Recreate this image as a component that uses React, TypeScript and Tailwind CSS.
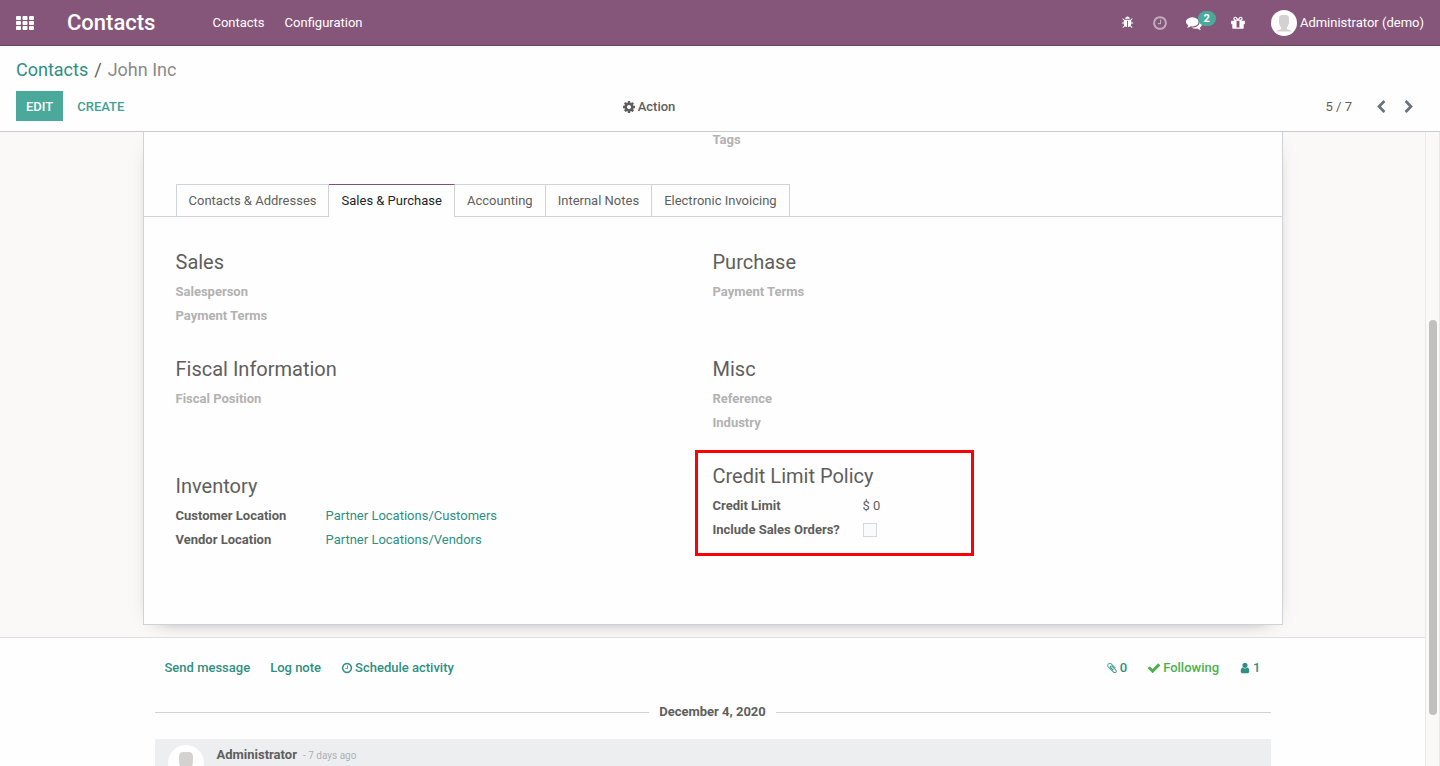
import type { ReactNode } from "react";

const PATHS = {
  clock:
    "M1024 544v448q0 14-9 23t-23 9h-320q-14 0-23-9t-9-23v-64q0-14 9-23t23-9h224v-352q0-14 9-23t23-9h64q14 0 23 9t9 23zm416 352q0-148-73-273t-198-198-273-73-273 73-198 198-73 273 73 273 198 198 273 73 273-73 198-198 73-273zm224 0q0 209-103 385.5t-279.5 279.5-385.5 103-385.5-103-279.5-279.5-103-385.5 103-385.5 279.5-279.5 385.5-103 385.5 103 279.5 279.5 103 385.5z",
  bug: "M1696 960q0 26-19 45t-45 19h-224q0 171-67 290l208 209q19 19 19 45t-19 45q-18 19-45 19t-45-19l-198-197q-5 5-15 13t-42 28.5-65 36.5-82 29-97 13v-896h-128v896q-51 0-101.5-13.5t-87-33-66-39-43.5-32.5l-15-14-183 207q-20 21-48 21-24 0-43-16-19-18-20.5-44.5t15.5-46.5l202-227q-58-114-58-274h-224q-26 0-45-19t-19-45 19-45 45-19h224v-294l-173-173q-19-19-19-45t19-45 45-19 45 19l173 173h844l173-173q19-19 45-19t45 19 19 45-19 45l-173 173v294h224q26 0 45 19t19 45zm-480-576h-640q0-133 93.5-226.5t226.5-93.5 226.5 93.5 93.5 226.5z",
  comments:
    "M1408 768q0 139-94 257t-256.5 186.5-353.5 68.5q-86 0-176-16-124 88-278 128-36 9-86 16h-3q-11 0-20.5-8t-11.5-21q-1-3-1-6.5t.5-6.5 2-6l2.5-5 3.5-5.5 4-5 4.5-5 4-4.5q5-6 23-25t26-29.5 22.5-29 25-38.5 20.5-44q-124-72-195-177t-71-224q0-139 94-257t256.5-186.5 353.5-68.5 353.5 68.5 256.5 186.5 94 257zm384 256q0 120-71 224.5t-195 176.5q10 24 20.5 44t25 38.5 22.5 29 26 29.5 23 25q1 1 4 4.5t4.5 5 4 5 3.5 5.5l2.5 5 2 6 .5 6.5-1 6.5q-3 14-13 22t-22 7q-50-7-86-16-154-40-278-128-90 16-176 16-271 0-472-132 58 4 88 4 161 0 309-45t264-129q125-92 192-212t67-254q0-77-23-152 129 71 204 178t75 230z",
  gift: "M1056 1356v-716h-320v716q0 25 18 38.5t46 13.5h192q28 0 46-13.5t18-38.5zm-456-844h195l-126-161q-26-31-69-31-40 0-68 28t-28 68 28 68 68 28zm688-96q0-40-28-68t-68-28q-43 0-69 31l-125 161h194q40 0 68-28t28-68zm376 256v320q0 14-9 23t-23 9h-96v416q0 40-28 68t-68 28h-1088q-40 0-68-28t-28-68v-416h-96q-14 0-23-9t-9-23v-320q0-14 9-23t23-9h440q-93 0-158.5-65.5t-65.5-158.5 65.5-158.5 158.5-65.5q107 0 168 77l128 165 128-165q61-77 168-77 93 0 158.5 65.5t65.5 158.5-65.5 158.5-158.5 65.5h440q14 0 23 9t9 23z",
  cog: "M1152 896q0-106-75-181t-181-75-181 75-75 181 75 181 181 75 181-75 75-181zm512-109v222q0 12-8 23t-20 13l-185 28q-19 54-39 91 35 50 107 138 10 12 10 25t-9 23q-27 37-99 108t-94 71q-12 0-26-9l-138-108q-44 23-91 38-16 136-29 186-7 28-36 28h-222q-14 0-24.5-8.5t-11.5-21.5l-28-184q-49-16-90-37l-141 107q-10 9-25 9-14 0-25-11-126-114-165-168-7-10-7-23 0-12 8-23 15-21 51-66.5t54-70.5q-27-50-41-99l-183-27q-13-2-21-12.5t-8-23.5v-222q0-12 8-23t19-13l186-28q14-46 39-92-40-57-107-138-10-12-10-24 0-10 9-23 26-36 98.5-107.5t94.5-71.5q13 0 26 10l138 107q44-23 91-38 16-136 29-186 7-28 36-28h222q14 0 24.5 8.5t11.5 21.5l28 184q49 16 90 37l142-107q9-9 24-9 13 0 25 10 129 119 165 170 7 8 7 22 0 12-8 23-15 21-51 66.5t-54 70.5q26 50 41 98l183 28q13 2 21 12.5t8 23.5z",
  left: "M1427 301l-531 531 531 531q19 19 19 45t-19 45l-166 166q-19 19-45 19t-45-19l-742-742q-19-19-19-45t19-45l742-742q19-19 45-19t45 19l166 166q19 19 19 45t-19 45z",
  right:
    "M1363 877l-742 742q-19 19-45 19t-45-19l-166-166q-19-19-19-45t19-45l531-531-531-531q-19-19-19-45t19-45l166-166q19-19 45-19t45 19l742 742q19 19 19 45t-19 45z",
  check:
    "M1671 566q0 40-28 68l-724 724-136 136q-28 28-68 28t-68-28l-136-136-362-362q-28-28-28-68t28-68l136-136q28-28 68-28t68 28l294 295 656-657q28-28 68-28t68 28l136 136q28 28 28 68z",
  user: "M1536 1399q0 109-62.5 187t-150.5 78h-854q-88 0-150.5-78t-62.5-187q0-85 8.5-160.5t31.5-152 58.5-131 94-89 134.5-34.5q131 128 313 128t313-128q76 0 134.5 34.5t94 89 58.5 131 31.5 152 8.5 160.5zm-256-887q0 159-112.5 271.5t-271.5 112.5-271.5-112.5-112.5-271.5 112.5-271.5 271.5-112.5 271.5 112.5 112.5 271.5z",
  clip: "M1596 1385q0 117-79 196t-196 79q-135 0-235-100l-777-776q-113-115-113-271 0-159 110-270t269-111q158 0 273 113l605 606q10 10 10 22 0 16-30.5 46.5t-46.5 30.5q-13 0-23-10l-606-607q-79-77-181-77-106 0-179 75t-73 181q0 105 76 181l776 777q63 63 145 63 64 0 106-42t42-106q0-82-63-145l-581-581q-26-24-60-24-29 0-48 19t-19 48q0 32 25 59l410 410q10 10 10 22 0 16-31 47t-47 31q-12 0-22-10l-410-410q-63-61-63-149 0-82 57-139t139-57q88 0 149 63l581 581q100 98 100 235z",
};

function Icon({ name, className }: { name: keyof typeof PATHS; className: string }) {
  return (
    <svg viewBox="0 0 1792 1792" fill="currentColor" aria-hidden="true" className={`shrink-0 ${className}`}>
      <path d={PATHS[name]} />
    </svg>
  );
}

function Avatar({ className }: { className: string }) {
  return (
    <svg viewBox="0 0 26 26" aria-hidden="true" className={`shrink-0 rounded-full ${className}`}>
      <rect width="26" height="26" fill="#fefefe" />
      <path
        d="M11 5h4c2 0 3 1.300 3 3.200v3.300c0 2.700-.8 4.900-2.200 6.200v1.200c1 .9 4 .8 5.200 2.600H5c1.200-1.800 4.200-1.700 5.200-2.600v-1.200C8.800 16.400 8 14.200 8 11.500V8.200C8 6.300 9 5 11 5z"
        fill="#d3d2d0"
      />
    </svg>
  );
}

function Group({ title, children }: { title: string; children?: ReactNode }) {
  return (
    <section className="relative min-h-[81px]">
      <h2 className="mb-[3px] text-xl leading-[30px]">{title}</h2>
      {children}
    </section>
  );
}

function EmptyField({ label }: { label: string }) {
  return <div className="font-bold leading-6 text-[#b2b2b2]">{label}</div>;
}

function LinkField({ label, value }: { label: string; value: string }) {
  return (
    <div className="flex leading-6">
      <span className="w-[150px] font-bold">{label}</span>
      <a href="#location" className="text-[#2f8f83]">
        {value}
      </a>
    </div>
  );
}

const TABS = ["Contacts & Addresses", "Sales & Purchase", "Accounting", "Internal Notes", "Electronic Invoicing"];

export default function App() {
  return (
    <div className="flex h-screen flex-col overflow-hidden bg-[#fefefe] font-[Roboto,sans-serif] text-[13px] text-[#5f5e5d]">
      <nav className="flex h-[46px] shrink-0 items-center border-b border-[#68465f] bg-[#85567a] px-4 text-white">
        <button aria-label="Applications">
          <svg viewBox="0 0 18 14" fill="currentColor" className="h-3.5 w-[18px]">
            {[0, 5, 10].map((y) =>
              [0, 6.5, 13].map((x) => <rect key={`${x}-${y}`} x={x} y={y} width="5" height="4" rx="0.900" />),
            )}
          </svg>
        </button>
        <a href="#home" className="ml-[33px] text-[22px] font-medium">
          Contacts
        </a>
        <a href="#contacts" className="ml-[57px]">
          Contacts
        </a>
        <a href="#configuration" className="ml-5">
          Configuration
        </a>
        <div className="ml-auto flex items-center">
          <button aria-label="Debug">
            <Icon name="bug" className="size-[13px]" />
          </button>
          <button aria-label="Activities" className="ml-[18px] opacity-50">
            <Icon name="clock" className="size-4" />
          </button>
          <button aria-label="Messages" className="ml-[18px] flex items-center">
            <Icon name="comments" className="size-4" />
            <span className="-ml-1 -mt-2 rounded-full bg-[#4aa99b] px-1.5 py-0.5 text-[11px] font-bold leading-[11px]">
              2
            </span>
          </button>
          <button aria-label="Gifts" className="ml-3.5">
            <Icon name="gift" className="size-4" />
          </button>
          <button className="ml-[25px] flex items-center gap-[3px]">
            <Avatar className="size-[26px]" />
            Administrator (demo)
          </button>
        </div>
      </nav>

      <header className="shrink-0 border-b border-[#c9cbcd] px-4 pb-2.5 pt-2.5">
        <div className="flex gap-1.5 text-lg leading-7">
          <a href="#contacts" className="text-[#2f8f83]">
            Contacts
          </a>
          <span>/</span>
          <span className="text-[#8b8a89]">John Inc</span>
        </div>
        <div className="mt-[7px] grid grid-cols-3 items-stretch">
          <div className="flex">
            <button className="h-[30px] bg-[#4aa99b] px-2.5 pt-px font-medium text-white">EDIT</button>
            <button className="h-[30px] px-3.5 pt-px font-medium text-[#3fa193]">CREATE</button>
          </div>
          <button className="flex items-center gap-0.5 justify-self-center pr-[143px] pt-px font-medium">
            <Icon name="cog" className="size-3.5" />
            Action
          </button>
          <div className="flex items-center justify-end pr-2 pt-px">
            <span>5 / 7</span>
            <button aria-label="Previous" className="ml-[22px] text-[#6a747c]">
              <Icon name="left" className="size-3.5" />
            </button>
            <button aria-label="Next" className="ml-3.5 text-[#6a747c]">
              <Icon name="right" className="size-3.5" />
            </button>
          </div>
        </div>
      </header>

      <div className="flex min-h-0 flex-1">
        <main className="min-w-0 flex-1">
          <div className="overflow-hidden border-b border-[#dde0e2] bg-[#faf9f8] pb-3">
            <div className="mx-auto max-w-[1140px] border border-t-0 border-[#cfd2d8] bg-[#fefefe] pb-[72px] shadow-[0_5px_20px_-15px_rgba(0,0,0,0.8)]">
              <div className="grid grid-cols-2 px-8 pb-[34px] font-bold leading-5 text-[#b2b2b2]">
                <div className="col-start-2 -mt-0.5">Tags</div>
              </div>
              <div role="tablist" className="flex border-b border-[#cfd2d8] pl-8">
                {TABS.map((tab) =>
                  tab === "Sales & Purchase" ? (
                    <button
                      key={tab}
                      role="tab"
                      aria-selected="true"
                      className="-mb-px h-[33px] border-r border-t border-r-[#cfd2d8] border-t-[#7c5674] bg-[#fefefe] pl-[13px] pr-3 text-[#212529]"
                    >
                      {tab}
                    </button>
                  ) : (
                    <button
                      key={tab}
                      role="tab"
                      aria-selected="false"
                      className="h-8 border-r border-t border-[#cfd2d8] px-3 first:border-l first:pr-[11px]"
                    >
                      {tab}
                    </button>
                  ),
                )}
              </div>
              <div className="grid grid-cols-2 px-8 pt-[30px]">
                <div className="space-y-[26px]">
                  <Group title="Sales">
                    <EmptyField label="Salesperson" />
                    <EmptyField label="Payment Terms" />
                  </Group>
                  <Group title="Fiscal Information">
                    <EmptyField label="Fiscal Position" />
                  </Group>
                  <div className="pt-2.5">
                    <Group title="Inventory">
                      <LinkField label="Customer Location" value="Partner Locations/Customers" />
                      <LinkField label="Vendor Location" value="Partner Locations/Vendors" />
                    </Group>
                  </div>
                </div>
                <div className="space-y-[26px]">
                  <Group title="Purchase">
                    <EmptyField label="Payment Terms" />
                  </Group>
                  <Group title="Misc">
                    <EmptyField label="Reference" />
                    <EmptyField label="Industry" />
                  </Group>
                  <Group title="Credit Limit Policy">
                    <div className="flex leading-6">
                      <span className="w-[150px] font-bold">Credit Limit</span>
                      <span>$ 0</span>
                    </div>
                    <div className="flex items-center leading-6">
                      <label htmlFor="include-orders" className="w-[150px] font-bold">
                        Include Sales Orders?
                      </label>
                      <input
                        id="include-orders"
                        type="checkbox"
                        className="size-3.5 appearance-none border border-[#d5d7da] bg-[#fafbff]"
                      />
                    </div>
                    <div className="pointer-events-none absolute -left-[18px] -top-[11px] h-[106px] w-[279px] border-3 border-[#fb0007]" />
                  </Group>
                </div>
              </div>
            </div>
          </div>

          <div className="mx-auto max-w-[1116px]">
            <div className="flex h-[60px] items-center justify-between px-2.5 font-medium text-[#2f8f83]">
              <div className="flex gap-5">
                <button>Send message</button>
                <button>Log note</button>
                <button className="flex items-center gap-0.5">
                  <Icon name="clock" className="size-3" />
                  Schedule activity
                </button>
              </div>
              <div className="flex gap-5">
                <button aria-label="Attachments" className="flex items-center gap-0.5">
                  <Icon name="clip" className="size-3" />0
                </button>
                <button className="flex items-center gap-0.5 text-[#4cb04f]">
                  <Icon name="check" className="size-3.5" />
                  Following
                </button>
                <button aria-label="Followers" className="flex items-center gap-0.5">
                  <Icon name="user" className="size-3" />1
                </button>
              </div>
            </div>
            <div className="flex items-center gap-2.5 pt-1 font-bold leading-5">
              <hr className="flex-1 border-[#cfd2d8]" />
              December 4, 2020
              <hr className="flex-1 border-[#cfd2d8]" />
            </div>
            <article className="mt-[17px] flex bg-[#edeef0] px-[13px] py-1.5">
              <Avatar className="size-9" />
              <div className="ml-[13px] leading-5">
                <strong>Administrator</strong>
                <span className="ml-1.5 text-[10px] text-[#adb1b5]">- 7 days ago</span>
              </div>
            </article>
          </div>
        </main>
        <div className="flex w-[15px] shrink-0 flex-col items-center border-x border-[#e8e8e8] bg-[#faf9f8] pt-[188px]">
          <div className="h-[395px] w-2 rounded-full bg-[#c1c0bf]" />
        </div>
      </div>
    </div>
  );
}
